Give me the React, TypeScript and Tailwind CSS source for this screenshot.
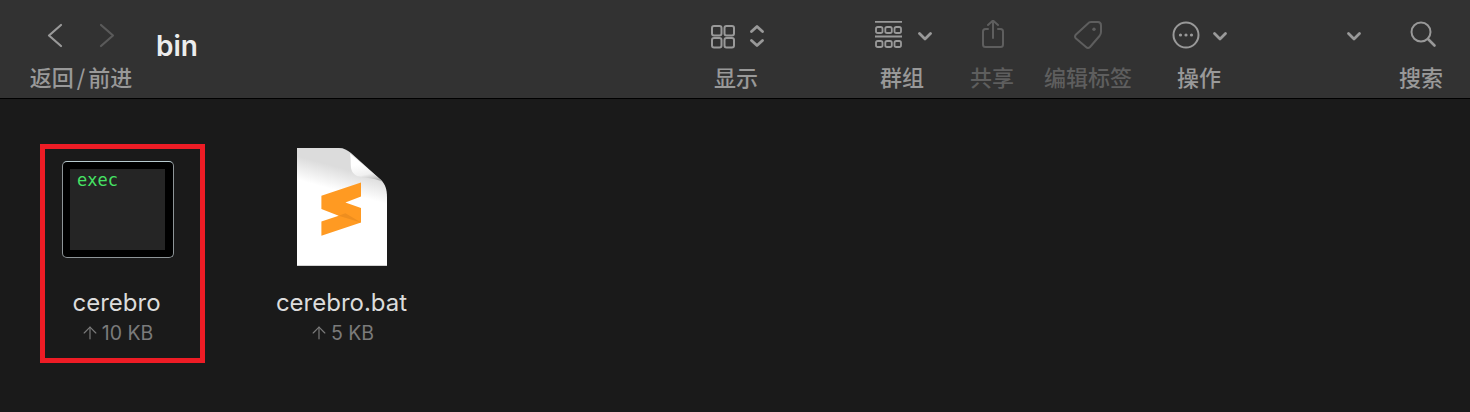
import React from 'react';
import { ArrowUp } from 'lucide-react';

const cjk = '"Noto Sans CJK SC", "Inter", sans-serif';

const Chevron = ({ x }: { x: number }) => (
  <path d={`M${x - 5.5} 13.5l5.5 5.5 5.500-5.500`} fill="none" stroke="currentColor" strokeWidth={2.8} strokeLinecap="round" strokeLinejoin="round" />
);

const ToolItem = ({ label, width, dim, children }: { label: React.ReactNode; width: string; dim?: boolean; children: React.ReactNode }) => (
  <div className={`flex flex-col items-center ${width} ${dim ? 'text-[#5e5e5e]' : 'text-[#999999]'}`}>
    <div className="flex h-[30px] w-full justify-center">{children}</div>
    <div className="mt-[14px] h-[24px] whitespace-nowrap text-[22px] leading-[24px] font-medium" style={{ fontFamily: cjk }}>{label}</div>
  </div>
);

const FileCaption = ({ name, size, top }: { name: string; size: string; top: string }) => (
  <div className={`flex flex-col items-center ${top}`}>
    <div className="h-[28px] whitespace-nowrap text-[24px] leading-[28px] text-[#dcdcdc]">{name}</div>
    <div className="mt-[4px] flex h-[24px] items-center gap-[2px] whitespace-nowrap text-[19.500px] leading-[24px] text-[#7b7b7b]">
      <ArrowUp size={20} strokeWidth={1.4} />
      <span>{size}</span>
    </div>
  </div>
);

const ExecIcon = () => (
  <div className="h-[97px] w-[112px] rounded-[5px] border border-[#8e9598] border-t-[#b9cbd0] bg-black pt-[7px] pl-[7px]">
    <div className="h-[81px] w-[95px] bg-[#252525] pl-[7px] text-[17px] leading-[22px] text-[#45e264]" style={{ fontFamily: '"DejaVu Sans Mono", monospace' }}>
      exec
    </div>
  </div>
);

const SublimeFile = () => (
  <svg width="90" height="118" viewBox="0 0 90 118">
    <defs>
      <linearGradient id="fold" x1="0.45" y1="0.35" x2="0.6" y2="1">
        <stop offset="0" stopColor="#ffffff" />
        <stop offset="0.6" stopColor="#f0f0f0" />
        <stop offset="1" stopColor="#b4b4b4" />
      </linearGradient>
      <linearGradient id="page" gradientUnits="userSpaceOnUse" x1="66" y1="26" x2="60" y2="48">
        <stop offset="0" stopColor="#dcdcdc" />
        <stop offset="1" stopColor="#ffffff" />
      </linearGradient>
    </defs>
    <path d="M0 0H42C47 0 50 2 54 5L84 32C88 36 90 41 90 49V118H0Z" fill="url(#page)" />
    <path d="M0 117.500H90" stroke="#d4d4d4" strokeWidth={1} />
    <path d="M53 5.500L84 32L85 33.500C80 31 72 30 64 29C58 28 55 25 54 20C53.500 15 54 10 53 5.500Z" fill="url(#fold)" />
    <path d="M24.400 47.700L64 34.400V48.400L48.400 54.400L64 60V74.400L24.400 87.700V73.400L41.700 67.700L24.400 61Z" fill="#ff9a22" />
    <path d="M41.700 67.700L48.400 65.200L64 74.400Z" fill="#ee8e1f" />
  </svg>
);

export default function App() {
  return (
    <div className="h-[412px] w-[1470px] overflow-hidden bg-[#1a1a1a]" style={{ fontFamily: 'Inter, sans-serif' }}>
      <header className="flex h-[99px] items-start border-b border-black bg-[#323232] pt-[20px] pr-[19px] pl-[30px]">
        <ToolItem label={<>返回<span className="px-[3px]">/</span>前进</>} width="w-[102px]">
          <svg width="102" height="30" viewBox="0 0 102 30" fill="none" stroke="currentColor" strokeWidth={2.2} strokeLinecap="round" strokeLinejoin="round">
            <path d="M31 5L19 15.500L31 26" />
            <path d="M71 5L83 15.500L71 26" stroke="#5a5a5a" />
          </svg>
        </ToolItem>
        <h1 className="ml-[24px] h-[30px] text-[28px] leading-[52px] font-semibold text-[#ececec]">bin</h1>
        <div className="flex-1" />
        <ToolItem label="显示" width="w-[60px]">
          <svg width="60" height="30" viewBox="0 0 60 30" fill="none" stroke="currentColor" strokeWidth={2} strokeLinecap="round" strokeLinejoin="round">
            <rect x="6" y="6" width="9.500" height="9.500" rx="2" />
            <rect x="18.500" y="6" width="9.500" height="9.500" rx="2" />
            <rect x="6" y="18" width="9.500" height="9.500" rx="2" />
            <rect x="18.500" y="18" width="9.500" height="9.500" rx="2" />
            <path d="M45.500 11.500L51 6.500L56.500 11.500M45.500 20.500L51 25.500L56.500 20.500" strokeWidth={2.8} />
          </svg>
        </ToolItem>
        <div className="ml-[106px]">
          <ToolItem label="群组" width="w-[60px]">
            <svg width="60" height="30" viewBox="0 0 60 30" fill="none" stroke="currentColor" strokeWidth={1.8} strokeLinejoin="round">
              <path d="M3 1.800H30M3 16.500H30" />
              <rect x="4" y="7" width="6.500" height="6" rx="1.800" />
              <rect x="13.300" y="7" width="6.500" height="6" rx="1.800" />
              <rect x="22.500" y="7" width="6.500" height="6" rx="1.800" />
              <rect x="4" y="21" width="6.500" height="6" rx="1.800" />
              <rect x="13.300" y="21" width="6.500" height="6" rx="1.800" />
              <rect x="22.500" y="21" width="6.500" height="6" rx="1.800" />
              <Chevron x={53} />
            </svg>
          </ToolItem>
        </div>
        <div className="ml-[30px]">
          <ToolItem label="共享" width="w-[60px]" dim>
            <svg width="60" height="30" viewBox="0 0 60 30" fill="none" stroke="currentColor" strokeWidth={2} strokeLinecap="round" strokeLinejoin="round">
              <path d="M26 9H23.500C22 9 21 10 21 11.500V24.500C21 26 22 27 23.500 27H38.500C40 27 41 26 41 24.500V11.500C41 10 40 9 38.500 9H36" />
              <path d="M31 18V0.500M26 5L31 0.500L36 5" />
            </svg>
          </ToolItem>
        </div>
        <div className="ml-[22px]">
          <ToolItem label="编辑标签" width="w-[88px]" dim>
            <svg width="88" height="30" viewBox="0 0 88 30" fill="none" stroke="currentColor" strokeWidth={2} strokeLinecap="round" strokeLinejoin="round">
              <path d="M47 2H54Q57 2 57 5.500V12Q57 14 55.500 16L46 27Q44 29 42 27L32 18.500Q30 16.500 32 14.500L44 3.500Q45 2 47 2Z" />
              <circle cx="50" cy="9.300" r="1.700" fill="currentColor" stroke="none" />
            </svg>
          </ToolItem>
        </div>
        <div className="ml-[37px]">
          <ToolItem label="操作" width="w-[60px]">
            <svg width="60" height="30" viewBox="0 0 60 30" fill="none" stroke="currentColor" strokeWidth={2} strokeLinecap="round" strokeLinejoin="round">
              <circle cx="17" cy="15" r="12.500" />
              <circle cx="11.500" cy="15" r="1.600" fill="currentColor" stroke="none" />
              <circle cx="17" cy="15" r="1.600" fill="currentColor" stroke="none" />
              <circle cx="22.500" cy="15" r="1.600" fill="currentColor" stroke="none" />
              <Chevron x={51} />
            </svg>
          </ToolItem>
        </div>
        <div className="ml-[115px] h-[30px] w-[20px] text-[#999999]">
          <svg width="20" height="30" viewBox="0 0 20 30" fill="none" stroke="currentColor" strokeLinecap="round" strokeLinejoin="round">
            <Chevron x={10} />
          </svg>
        </div>
        <div className="ml-[27px]">
          <ToolItem label="搜索" width="w-[60px]">
            <svg width="60" height="30" viewBox="0 0 60 30" fill="none" stroke="currentColor" strokeWidth={2} strokeLinecap="round" strokeLinejoin="round">
              <circle cx="30" cy="12" r="9.500" />
              <path d="M37 19L43.500 25.500" strokeWidth={2.6} />
            </svg>
          </ToolItem>
        </div>
      </header>
      <main className="flex items-start pt-[45px] pl-[40px]">
        <div className="h-[219px] w-[165px] border-[5px] border-[#ee1c25] pt-[12px] pl-[17px]">
          <div className="flex w-[109px] flex-col items-start">
            <ExecIcon />
            <div className="flex w-full justify-center">
              <FileCaption name="cerebro" size="10 KB" top="mt-[31px]" />
            </div>
          </div>
        </div>
        <div className="ml-[54px] flex h-[219px] w-[165px] flex-col items-center pt-[4px]">
          <SublimeFile />
          <FileCaption name="cerebro.bat" size="5 KB" top="mt-[23px]" />
        </div>
      </main>
    </div>
  );
}
